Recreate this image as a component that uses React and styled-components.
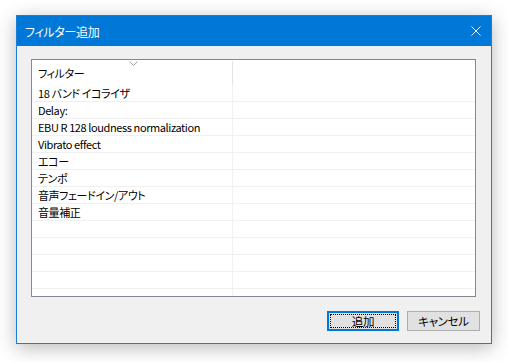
import React from 'react';
import styled, { createGlobalStyle } from 'styled-components';

const GlobalStyle = createGlobalStyle`
  html, body {
    margin: 0;
    background: #ffffff;
  }
  body {
    font-family: "Noto Sans CJK JP", "Noto Sans", sans-serif;
    font-feature-settings: "palt";
  }
`;

const filters = [
  '18 バンド イコライザ',
  'Delay:',
  'EBU R 128 loudness normalization',
  'Vibrato effect',
  'エコー',
  'テンポ',
  '音声フェードイン/アウト',
  '音量補正',
];

const ROW_COUNT = 13;

const Page = styled.div`
  padding: 15px 0 0 16px;
  height: 362px;
  box-sizing: border-box;
`;

const Window = styled.div`
  width: 476px;
  height: 329px;
  box-sizing: border-box;
  border: 1px solid #1a7fd6;
  background: #f0f0f0;
  display: flex;
  flex-direction: column;
  box-shadow: 0 4px 18px rgba(0, 0, 0, 0.28);
`;

const TitleBar = styled.div`
  height: 30px;
  background: #0078d7;
  display: flex;
  align-items: center;
  justify-content: space-between;
  padding: 0 10px 0 8px;
  color: #ffffff;
  font-size: 12px;
  letter-spacing: -0.3px;
`;

const Body = styled.div`
  flex: 1;
  display: flex;
  flex-direction: column;
  padding: 13px 15px 12px 14px;
  gap: 14px;
`;

const ListBox = styled.div`
  height: 238px;
  box-sizing: border-box;
  border: 1px solid #828790;
  background: #ffffff;
  overflow: hidden;
  font-size: 11px;
  letter-spacing: -0.4px;
  color: #000000;
`;

const Header = styled.div`
  height: 25px;
  display: grid;
  grid-template-columns: 201px 1fr;
`;

const HeaderCell = styled.div`
  position: relative;
  display: flex;
  align-items: center;
  padding-left: 6px;
  border-right: ${(p) => (p.$sep ? '1px solid #e5e5e5' : 'none')};
  margin-top: 1px;
`;

const SortCaret = styled.svg`
  position: absolute;
  left: 97px;
  top: 0;
`;

const Row = styled.div`
  height: 17px;
  box-sizing: border-box;
  display: grid;
  grid-template-columns: 201px 1fr;
  border-bottom: 1px solid #f0f0f0;
`;

const Cell = styled.div`
  display: flex;
  align-items: center;
  padding-left: 6px;
  white-space: nowrap;
  border-right: ${(p) => (p.$sep ? '1px solid #f0f0f0' : 'none')};
`;

const Footer = styled.div`
  display: flex;
  justify-content: flex-end;
  gap: 8px;
  margin-right: -4px;
`;

const Button = styled.button`
  width: ${(p) => (p.$primary ? '72px' : '73px')};
  height: 20px;
  box-sizing: border-box;
  background: #e1e1e1;
  border: ${(p) => (p.$primary ? '2px solid #0078d7' : '1px solid #adadad')};
  padding: 0;
  margin: 0;
  font-family: "Noto Sans CJK JP", "Noto Sans", sans-serif;
  font-feature-settings: "palt";
  font-size: 11.5px;
  letter-spacing: -0.3px;
  color: #000000;
  display: flex;
  align-items: center;
  justify-content: center;
`;

const FocusRing = styled.span`
  align-self: stretch;
  flex: 1;
  margin: 1px;
  border: 1px dotted #000000;
  display: flex;
  align-items: center;
  justify-content: center;
`;

export default function App() {
  const rows = Array.from({ length: ROW_COUNT }, (_, i) => filters[i] || '');
  return (
    <Page>
      <GlobalStyle />
      <Window>
        <TitleBar>
          <span>フィルター追加</span>
          <svg width="10" height="10" viewBox="0 0 10 10">
            <path d="M0.5 0.5 L9.5 9.5 M9.5 0.5 L0.5 9.5" stroke="#ffffff" strokeWidth="1" />
          </svg>
        </TitleBar>
        <Body>
          <ListBox>
            <Header>
              <HeaderCell $sep>
                <SortCaret width="9" height="5" viewBox="0 0 9 5">
                  <path d="M0.5 0.5 L4.5 4.5 L8.5 0.5" fill="none" stroke="#a0a0a0" strokeWidth="1" />
                </SortCaret>
                フィルター
              </HeaderCell>
              <HeaderCell />
            </Header>
            {rows.map((name, i) => (
              <Row key={i}>
                <Cell $sep>{name}</Cell>
                <Cell />
              </Row>
            ))}
          </ListBox>
          <Footer>
            <Button $primary>
              <FocusRing>追加</FocusRing>
            </Button>
            <Button>キャンセル</Button>
          </Footer>
        </Body>
      </Window>
    </Page>
  );
}
